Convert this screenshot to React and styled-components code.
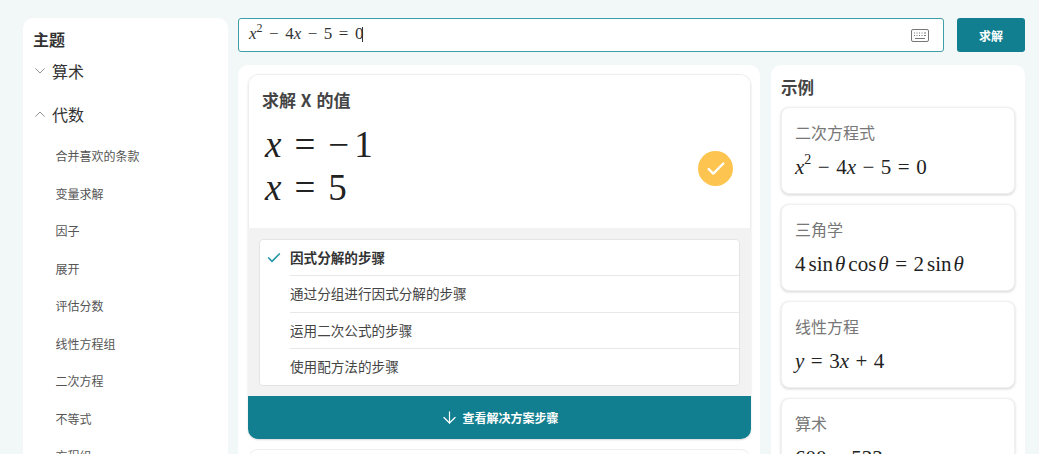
import styled, { createGlobalStyle } from "styled-components";
import { ArrowDown, Check } from "lucide-react";

const GlobalStyle = createGlobalStyle`
  html, body {
    margin: 0;
    padding: 0;
    height: 100%;
    overflow: hidden;
    background: #f2f7f7;
  }
  * {
    box-sizing: border-box;
  }
  body {
    font-family: "Noto Sans CJK SC", "Liberation Sans", sans-serif;
    color: #333;
  }
`;

const topics = ["合并喜欢的条款", "变量求解", "因子", "展开", "评估分数", "线性方程组", "二次方程", "不等式", "方程组"];
const methods = ["通过分组进行因式分解的步骤", "运用二次公式的步骤", "使用配方法的步骤"];

const Chevron = ({ up }) => (
  <ChevronIcon viewBox="0 0 10 6" width="10" height="6">
    <path d={up ? "M.4 5.600 5 1l4.600 4.600" : "M.4.4 5 5 9.600.4"} fill="none" stroke="#777" strokeWidth=".8" />
  </ChevronIcon>
);

const KeyboardIcon = () => (
  <svg viewBox="0 0 18 13" width="18" height="13">
    <rect x=".5" y=".5" width="17" height="12" rx="1.5" fill="none" stroke="#777" />
    <path d="M3 4h1M5.500 4h1M8 4h1M10.500 4h1M13 4h2M3 6.500h1M5.500 6.500h1M8 6.500h1M10.500 6.500h1M13 6.500h2M4 9.500h10" stroke="#777" />
  </svg>
);

const Quadratic = () => (
  <>
    <Var>x</Var>
    <sup>2</sup>
    <Op>−</Op>4<Var>x</Var>
    <Op>−</Op>5<Op>=</Op>0
  </>
);

const App = () => {
  return (
    <Page>
      <GlobalStyle />
      <Sidebar>
        <SideTitle>主题</SideTitle>
        <Group>
          <Chevron />
          算术
        </Group>
        <Group>
          <Chevron up />
          代数
        </Group>
        <TopicList>
          {topics.map((t) => (
            <Topic key={t}>{t}</Topic>
          ))}
        </TopicList>
      </Sidebar>

      <Content>
        <SearchRow>
          <SearchBox>
            <InputMath>
              <Quadratic />
              <Caret />
            </InputMath>
            <KeyboardIcon />
          </SearchBox>
          <SolveButton>求解</SolveButton>
        </SearchRow>

        <Panels>
          <MainPanel>
            <ResultCard>
              <Answer>
                <AnswerText>
                  <AnswerTitle>求解 X 的值</AnswerTitle>
                  <AnswerLine>
                    <Var>x</Var>
                    <BigOp>=</BigOp>
                    <Minus>−</Minus>1
                  </AnswerLine>
                  <AnswerLine>
                    <Var>x</Var>
                    <BigOp>=</BigOp>5
                  </AnswerLine>
                </AnswerText>
                <Badge>
                  <Check size={22} color="#fff" strokeWidth={2.6} />
                </Badge>
              </Answer>
              <StepsArea>
                <StepList>
                  <StepRow>
                    <StepCheck>
                      <Check size={16} color="#2a9aa8" strokeWidth={2.6} />
                    </StepCheck>
                    <StepText $active>因式分解的步骤</StepText>
                  </StepRow>
                  {methods.map((m) => (
                    <StepRow key={m}>
                      <StepCheck />
                      <StepText>{m}</StepText>
                    </StepRow>
                  ))}
                </StepList>
              </StepsArea>
              <ViewSteps>
                <ArrowDown size={19} strokeWidth={1.5} />
                查看解决方案步骤
              </ViewSteps>
            </ResultCard>
            <NextCard />
          </MainPanel>

          <ExamplePanel>
            <ExampleTitle>示例</ExampleTitle>
            <ExampleCard>
              <ExampleLabel>二次方程式</ExampleLabel>
              <ExampleMath>
                <Quadratic />
              </ExampleMath>
            </ExampleCard>
            <ExampleCard>
              <ExampleLabel>三角学</ExampleLabel>
              <ExampleMath>
                4<Fn>sin</Fn>
                <Var>θ</Var>
                <Fn>cos</Fn>
                <Var>θ</Var>
                <Op>=</Op>2<Fn>sin</Fn>
                <Var>θ</Var>
              </ExampleMath>
            </ExampleCard>
            <ExampleCard>
              <ExampleLabel>线性方程</ExampleLabel>
              <ExampleMath>
                <Var>y</Var>
                <Op>=</Op>3<Var>x</Var>
                <Op>+</Op>4
              </ExampleMath>
            </ExampleCard>
            <ExampleCard>
              <ExampleLabel>算术</ExampleLabel>
              <ExampleMath>
                600<Op>−</Op>533
              </ExampleMath>
            </ExampleCard>
          </ExamplePanel>
        </Panels>
      </Content>
    </Page>
  );
};

const Page = styled.div`
  display: grid;
  grid-template-columns: 205px 787px;
  gap: 10px;
  height: 100vh;
  padding: 18px 0 0 23px;
  overflow: hidden;
`;

const Sidebar = styled.aside`
  background: #fff;
  border-radius: 10px 10px 0 0;
  padding: 11px 10px 0;
  min-height: 600px;
`;

const SideTitle = styled.h3`
  margin: 0;
  font-size: 16px;
  line-height: 20px;
  font-weight: 700;
  color: #333;
`;

const Group = styled.div`
  display: flex;
  align-items: center;
  gap: 7px;
  height: 43px;
  font-size: 16px;
  color: #333;
`;

const ChevronIcon = styled.svg`
  flex: none;
  margin-left: 2px;
`;

const TopicList = styled.div`
  padding: 2px 0 0 22.5px;
`;

const Topic = styled.div`
  height: 37.5px;
  line-height: 37.5px;
  font-size: 12px;
  color: #555;
`;

const Content = styled.main`
  display: flex;
  flex-direction: column;
  gap: 13px;
`;

const SearchRow = styled.div`
  display: flex;
  gap: 13px;
  height: 34px;
  flex: none;
`;

const SearchBox = styled.div`
  flex: 1;
  display: flex;
  align-items: center;
  justify-content: space-between;
  padding: 0 14px 0 10px;
  background: #fff;
  border: 1px solid #3f9ea8;
  border-radius: 3px;
`;

const InputMath = styled.div`
  font-family: "Liberation Serif", serif;
  font-size: 17px;
  color: #333;
  display: flex;
  align-items: baseline;
  margin-top: -2px;
  sup {
    font-size: 12px;
    line-height: 0;
    position: relative;
    top: -7px;
  }
`;

const Caret = styled.span`
  width: 1px;
  height: 15px;
  margin-left: -1px;
  background: #333;
  align-self: center;
`;

const SolveButton = styled.button`
  width: 68px;
  border: 0;
  border-radius: 3px;
  background: #127f90;
  color: #fff;
  font-family: inherit;
  font-size: 12px;
  font-weight: 700;
`;

const Panels = styled.div`
  display: flex;
  gap: 11px;
  align-items: flex-start;
`;

const MainPanel = styled.section`
  width: 522px;
  background: #fff;
  border-radius: 10px 10px 0 0;
  padding: 9px 9px 0 10px;
`;

const ResultCard = styled.div`
  border-radius: 10px;
  overflow: hidden;
  box-shadow: 0 1px 2px rgba(0, 0, 0, 0.15);
`;

const Answer = styled.div`
  display: flex;
  justify-content: space-between;
  height: 154px;
  padding: 13px 17px 0 13px;
  border: 1px solid #eceeee;
  border-bottom: 0;
  border-radius: 10px 10px 0 0;
`;

const AnswerText = styled.div`
  display: flex;
  flex-direction: column;
`;

const AnswerTitle = styled.h2`
  margin: 0 0 11px;
  font-size: 17px;
  line-height: 24px;
  font-weight: 700;
  word-spacing: 1px;
  color: #444;
`;

const AnswerLine = styled.div`
  font-family: "Liberation Serif", serif;
  font-size: 37px;
  line-height: 43px;
  color: #222;
  padding-left: 3px;
`;

const BigOp = styled.span`
  margin: 0 13px;
`;

const Minus = styled.span`
  margin-right: 5px;
`;

const Badge = styled.span`
  display: flex;
  align-items: center;
  justify-content: center;
  width: 35px;
  height: 35px;
  border-radius: 50%;
  background: #fdc54f;
  margin-top: 63px;
`;

const StepsArea = styled.div`
  background: #f2f2f2;
  padding: 11px 11px 10px;
`;

const StepList = styled.div`
  background: #fff;
  border: 1px solid #e4e4e4;
  border-radius: 4px;
`;

const StepRow = styled.div`
  display: flex;
  align-items: center;
  height: 36.25px;
  &:not(:last-child) > span:last-child {
    border-bottom: 1px solid #e8e8e8;
  }
`;

const StepCheck = styled.span`
  flex: none;
  width: 30px;
  padding-left: 6px;
  display: flex;
  align-items: center;
`;

const StepText = styled.span`
  flex: 1;
  height: 100%;
  display: flex;
  align-items: center;
  padding-bottom: 1px;
  font-size: 13.6px;
  font-weight: ${(p) => (p.$active ? 700 : 400)};
  color: ${(p) => (p.$active ? "#333" : "#444")};
`;

const ViewSteps = styled.div`
  display: flex;
  align-items: center;
  justify-content: center;
  gap: 3px;
  height: 43px;
  background: #127f90;
  color: #fff;
  font-size: 12px;
  font-weight: 700;
`;

const NextCard = styled.div`
  height: 120px;
  margin-top: 10px;
  border: 1px solid #eceeee;
  border-radius: 10px;
`;

const ExamplePanel = styled.section`
  width: 254px;
  background: #fff;
  border-radius: 10px 10px 0 0;
  padding: 10px;
  display: flex;
  flex-direction: column;
  gap: 10px;
`;

const ExampleTitle = styled.h3`
  margin: 1px 0 -2px;
  font-size: 16.500px;
  line-height: 23px;
  font-weight: 700;
  color: #444;
`;

const ExampleCard = styled.div`
  height: 87px;
  flex: none;
  padding: 12px 13px 0;
  background: #fff;
  border: 1px solid #f0f0f0;
  border-radius: 8px;
  box-shadow: 0 1px 3px rgba(0, 0, 0, 0.18);
`;

const ExampleLabel = styled.div`
  font-size: 16px;
  line-height: 24px;
  color: #777;
`;

const ExampleMath = styled.div`
  margin-top: 10px;
  font-family: "Liberation Serif", serif;
  font-size: 21px;
  line-height: 26px;
  color: #222;
  sup {
    font-size: 14px;
    line-height: 0;
    position: relative;
    top: -2px;
    vertical-align: super;
  }
`;

const Var = styled.i`
  font-style: italic;
`;

const Op = styled.span`
  margin: 0 6.5px;
`;

const Fn = styled.span`
  margin: 0 2px 0 3px;
`;

export default App;
